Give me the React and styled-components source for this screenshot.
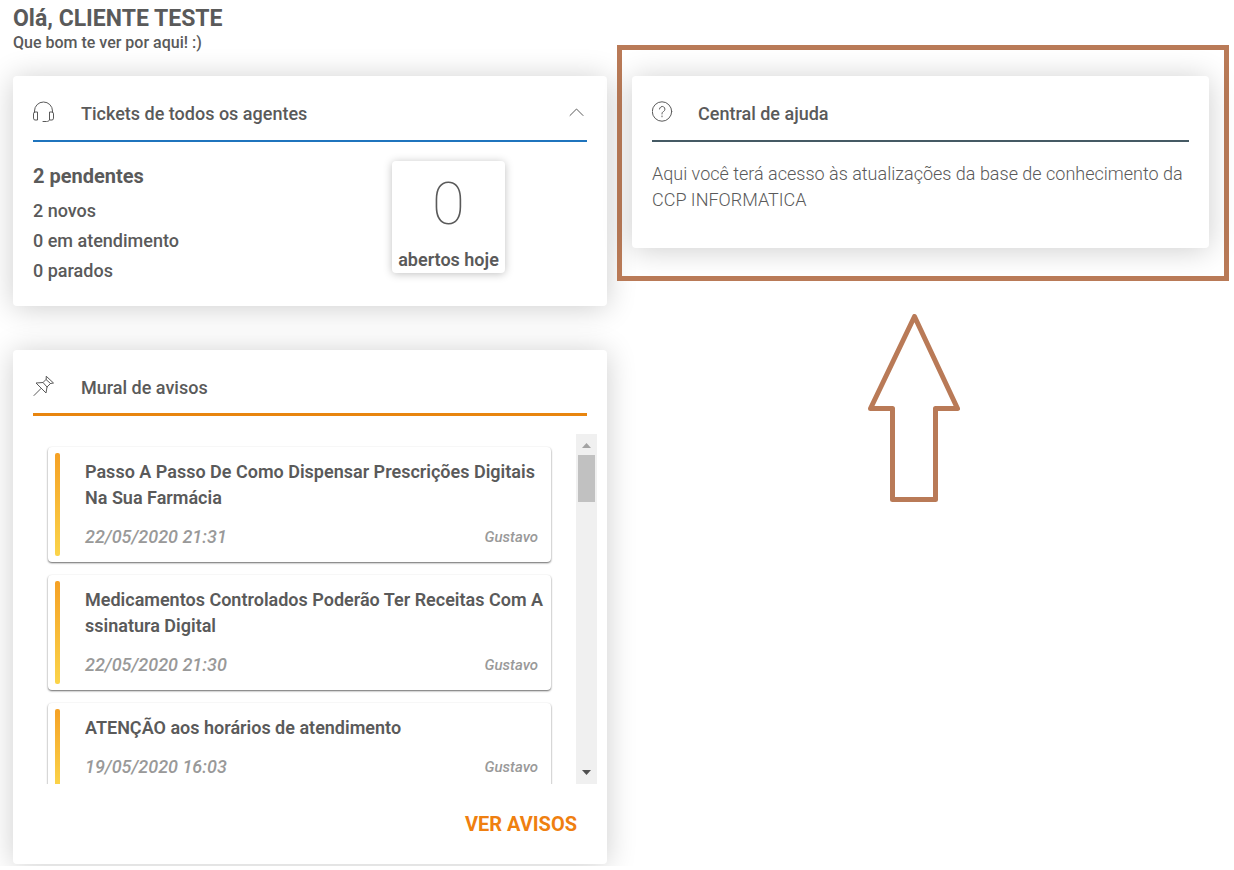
import React from "react";
import styled, { createGlobalStyle } from "styled-components";

const Global = createGlobalStyle`
  *, *::before, *::after { box-sizing: border-box; }
  body { margin: 0; background: #fff; color: #5a5a5a; font-family: Roboto, "Liberation Sans", sans-serif; font-size: 18px; font-weight: 500; }
  h1, h2, h3, p, ul { margin: 0; padding: 0; font-weight: inherit; font-size: inherit; }
  ul { list-style: none; }
`;

const Page = styled.main`
  display: grid;
  grid-template-columns: 594fr 612fr;
  gap: 10px;
  padding: 0 5px 2px 13px;
  overflow: hidden;
`;

const Column = styled.div`
  display: flex;
  flex-direction: column;
  min-width: 0;
`;

const SideColumn = styled(Column)`
  padding-top: 45px;
`;

const Greeting = styled.header`
  padding-top: 5px;
  height: 76px;
`;

const Hello = styled.h1`
  font-size: 23px;
  line-height: 28px;
  font-weight: 700;
`;

const Welcome = styled.p`
  font-size: 16px;
  line-height: 20px;
`;

const Card = styled.section`
  padding: 20px;
  background: #fff;
  border-radius: 4px;
  box-shadow: 0 2px 30px rgba(0, 0, 0, 0.2);
`;

const TicketsCard = styled(Card)`
  min-height: 230px;
  margin-bottom: 44px;
`;

const NoticesCard = styled(Card)`
  display: flex;
  flex-direction: column;
  min-height: 514px;
`;

const HelpCard = styled(Card)`
  min-height: 172px;
`;

const CardHeader = styled.div`
  display: flex;
  align-items: center;
  height: 46px;
  padding-bottom: 12px;
  border-bottom: ${(p) => p.$line || 2}px solid ${(p) => p.$color};
`;

const CardTitle = styled.h2`
  flex: 1;
  margin-left: ${(p) => p.$gap || 26}px;
  padding-top: 4px;
  line-height: 26px;
`;

const Icon = styled.svg`
  flex: none;
  width: 22px;
  height: 22px;
  fill: none;
  stroke: #5a5a5a;
  stroke-linecap: round;
  stroke-linejoin: round;
`;

const IconButton = styled.button`
  display: flex;
  padding: 0;
  border: 0;
  background: none;
  cursor: pointer;
`;

const TicketsBody = styled.div`
  display: flex;
  justify-content: space-between;
  padding: 19px 82px 0 0;
`;

const Pending = styled.p`
  margin-bottom: 5px;
  font-size: 20px;
  line-height: 30px;
  font-weight: 700;
`;

const Status = styled.li`
  line-height: 30px;
`;

const Counter = styled.div`
  display: flex;
  flex-direction: column;
  align-items: center;
  width: 113px;
  height: 112px;
  border-radius: 4px;
  box-shadow: 0 1px 8px rgba(0, 0, 0, 0.25);
`;

const CounterValue = styled.span`
  font-size: 60px;
  line-height: 86px;
  font-weight: 100;
`;

const CounterLabel = styled.span`
  line-height: 26px;
  font-weight: 600;
`;

const Scroller = styled.div`
  display: flex;
  justify-content: space-between;
  height: 350px;
  margin: 18px -10px 0 0;
`;

const NoticeList = styled.ul`
  flex: 1;
  margin-right: 20px;
  padding: 13px 5px 0 15px;
  overflow: hidden;
`;

const Notice = styled.li`
  display: flex;
  margin-bottom: 13px;
  padding: 6px 13px 6px 7px;
  border-radius: 4px;
  box-shadow: 0 1px 2px rgba(0, 0, 0, 0.6);
`;

const Stripe = styled.span`
  flex: none;
  width: 5px;
  margin-right: 25px;
  border-radius: 2px;
  background: linear-gradient(#f5a125, #fbd44a);
`;

const NoticeContent = styled.div`
  flex: 1;
  min-width: 0;
  padding: 6px 0;
`;

const NoticeTitle = styled.h3`
  margin-right: -8px;
  line-height: 26px;
  font-weight: 600;
`;

const NoticeMeta = styled.div`
  display: flex;
  justify-content: space-between;
  align-items: center;
  padding-top: 13px;
  line-height: 26px;
  color: #999;
  font-style: italic;
`;

const Author = styled.span`
  font-size: 15px;
`;

const ScrollTrack = styled.div`
  display: flex;
  flex-direction: column;
  align-items: center;
  width: 21px;
  background: #f0f0f0;
`;

const ScrollArrow = styled.svg`
  flex: none;
  width: 17px;
  height: 21px;
  fill: ${(p) => p.$color};
`;

const ScrollThumb = styled.div`
  width: 17px;
  height: 47px;
  margin-bottom: auto;
  background: #c1c1c1;
`;

const SeeAll = styled.a`
  align-self: flex-end;
  margin: 26px 10px 0 0;
  color: #ef7f10;
  font-size: 20px;
  line-height: 28px;
  font-weight: 700;
  text-decoration: none;
`;

const Highlight = styled.div`
  padding: 26px 15px 28px 10px;
  border: 5px solid #b97a57;
`;

const HelpText = styled.p`
  padding-top: 19px;
  line-height: 26px;
  font-weight: 350;
`;

const UpArrow = styled.svg`
  align-self: center;
  width: 92px;
  height: 189px;
  margin: 33px 18px 0 0;
  fill: none;
  stroke: #b97a57;
  stroke-width: 5px;
  stroke-linejoin: round;
`;

const notices = [
  { lines: ["Passo A Passo De Como Dispensar Prescrições Digitais", "Na Sua Farmácia"], date: "22/05/2020 21:31", author: "Gustavo" },
  { lines: ["Medicamentos Controlados Poderão Ter Receitas Com A", "ssinatura Digital"], date: "22/05/2020 21:30", author: "Gustavo" },
  { lines: ["ATENÇÃO aos horários de atendimento"], date: "19/05/2020 16:03", author: "Gustavo" },
];

const HeadsetIcon = () => (
  <Icon viewBox="0 0 22 22" aria-hidden="true">
    <path d="M1.500 11.500V10a9 9 0 0 1 18 0v1.500M.5 12.500a1.500 1.500 0 0 1 1.500-1.500H4.500v8H2A1.500 1.500 0 0 1 .5 17.500zM20.500 12.500a1.500 1.500 0 0 0-1.500-1.500H16.500v8h2.500a1.500 1.500 0 0 0 1.500-1.500zM16.500 19c-.5 1-1.500 1.500-3 1.500h-3.500" />
  </Icon>
);

const PinIcon = () => (
  <Icon viewBox="0 0 22 22" aria-hidden="true">
    <path d="M1 20.500l7-7M13.500 1.500l7 6.500-3 .5-3.500 3.500-1 6L3 8l7-.5L13 4.500zM10 7.500l4 4.500M13 4.500l4.500 4" />
  </Icon>
);

const HelpIcon = () => (
  <Icon viewBox="0 0 22 22" aria-hidden="true">
    <circle cx="10" cy="10.500" r="9.700" />
    <path d="M7.500 8a2.700 2.700 0 1 1 4 2.500c-1 .6-1.500 1-1.500 2.500M10 15v.8" />
  </Icon>
);

function NoticeItem({ lines, date, author }) {
  return (
    <Notice>
      <Stripe />
      <NoticeContent>
        <NoticeTitle>
          {lines.map((line, i) => (
            <React.Fragment key={line}>{i > 0 && <br />}{line}</React.Fragment>
          ))}
        </NoticeTitle>
        <NoticeMeta>
          <time>{date}</time>
          <Author>{author}</Author>
        </NoticeMeta>
      </NoticeContent>
    </Notice>
  );
}

export default function App() {
  return (
    <>
      <Global />
      <Page>
        <Column>
          <Greeting>
            <Hello>Olá, CLIENTE TESTE</Hello>
            <Welcome>Que bom te ver por aqui! :)</Welcome>
          </Greeting>
          <TicketsCard>
            <CardHeader $color="#1f74bd">
              <HeadsetIcon />
              <CardTitle>Tickets de todos os agentes</CardTitle>
              <IconButton aria-label="Recolher">
                <Icon viewBox="0 0 22 22" aria-hidden="true"><path d="M5 14.500l6.500-6.500 6.500 6.500" /></Icon>
              </IconButton>
            </CardHeader>
            <TicketsBody>
              <div>
                <Pending>2 pendentes</Pending>
                <ul>
                  <Status>2 novos</Status>
                  <Status>0 em atendimento</Status>
                  <Status>0 parados</Status>
                </ul>
              </div>
              <Counter>
                <CounterValue>0</CounterValue>
                <CounterLabel>abertos hoje</CounterLabel>
              </Counter>
            </TicketsBody>
          </TicketsCard>
          <NoticesCard>
            <CardHeader $color="#e8850f" $line={3}>
              <PinIcon />
              <CardTitle>Mural de avisos</CardTitle>
            </CardHeader>
            <Scroller>
              <NoticeList>
                {notices.map((n) => <NoticeItem key={n.date} {...n} />)}
              </NoticeList>
              <ScrollTrack aria-hidden="true">
                <ScrollArrow viewBox="0 0 17 21" $color="#a3a3a3"><path d="M4 14l4.500-5 4.500 5z" /></ScrollArrow>
                <ScrollThumb />
                <ScrollArrow viewBox="0 0 17 21" $color="#505050"><path d="M4 7l4.500 5 4.500-5z" /></ScrollArrow>
              </ScrollTrack>
            </Scroller>
            <SeeAll href="#avisos">VER AVISOS</SeeAll>
          </NoticesCard>
        </Column>
        <SideColumn>
          <Highlight>
            <HelpCard>
              <CardHeader $color="#455a64">
                <HelpIcon />
                <CardTitle $gap={24}>Central de ajuda</CardTitle>
              </CardHeader>
              <HelpText>Aqui você terá acesso às atualizações da base de conhecimento da CCP INFORMATICA</HelpText>
            </HelpCard>
          </Highlight>
          <UpArrow viewBox="0 0 92 189" aria-hidden="true">
            <path d="M46.500 2.500L89.500 94.500H67.500V185.500H24.500V94.500H2.500z" />
          </UpArrow>
        </SideColumn>
      </Page>
    </>
  );
}
